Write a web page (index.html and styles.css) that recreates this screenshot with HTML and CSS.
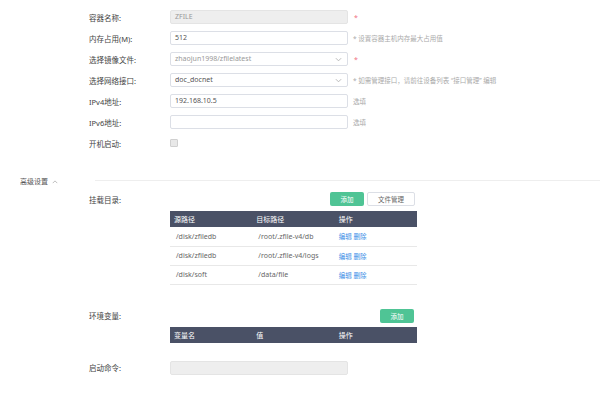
FILE: index.html
```html
<!DOCTYPE html>
<html lang="zh-CN">
<head>
    <meta charset="UTF-8">
    <meta name="viewport" content="width=device-width, initial-scale=1.0">
    <title>编辑容器</title>
    <link rel="stylesheet" href="styles.css">
</head>

<body>
    <!-- 基本设置 -->
    <div class="form">
        <div class="row">
            <span class="label">容器名称:</span>
            <div class="input disabled">ZFILE</div>
            <span class="req">*</span>
        </div>
        <div class="row">
            <span class="label">内存占用(M):</span>
            <div class="input">512</div>
            <span class="tip">* 设置容器主机内存最大占用值</span>
        </div>
        <div class="row">
            <span class="label">选择镜像文件:</span>
            <div class="input select muted">zhaojun1998/zfilelatest
                <svg class="arrow" viewBox="0 0 8 5"><polyline points="1,1 4,4 7,1"/></svg>
            </div>
            <span class="req">*</span>
        </div>
        <div class="row">
            <span class="label">选择网络接口:</span>
            <div class="input select">doc_docnet
                <svg class="arrow" viewBox="0 0 8 5"><polyline points="1,1 4,4 7,1"/></svg>
            </div>
            <span class="tip">* 如需管理接口，请前往设备列表 “接口管理” 编辑</span>
        </div>
        <div class="row">
            <span class="label">IPv4地址:</span>
            <div class="input">192.168.10.5</div>
            <span class="tip">选填</span>
        </div>
        <div class="row">
            <span class="label">IPv6地址:</span>
            <div class="input"></div>
            <span class="tip">选填</span>
        </div>
        <div class="row">
            <span class="label">开机启动:</span>
            <span class="checkbox"></span>
        </div>
    </div>

    <!-- 高级设置 -->
    <div class="advanced">
        <span class="advanced-title">高级设置 <svg class="up" viewBox="0 0 8 5"><polyline points="1,4 4,1 7,4"/></svg></span>
        <span class="line"></span>
    </div>

    <div class="section">
        <div class="section-head">
            <span class="label">挂载目录:</span>
            <div class="buttons">
                <button class="btn green">添加</button>
                <button class="btn plain">文件管理</button>
            </div>
        </div>
        <table class="table">
            <tr><th>源路径</th><th>目标路径</th><th>操作</th></tr>
            <tr><td>/disk/zfiledb</td><td>/root/.zfile-v4/db</td><td><a>编辑</a> <a>删除</a></td></tr>
            <tr><td>/disk/zfiledb</td><td>/root/.zfile-v4/logs</td><td><a>编辑</a> <a>删除</a></td></tr>
            <tr><td>/disk/soft</td><td>/data/file</td><td><a>编辑</a> <a>删除</a></td></tr>
        </table>
    </div>

    <div class="section env">
        <div class="section-head">
            <span class="label">环境变量:</span>
            <div class="buttons">
                <button class="btn green">添加</button>
            </div>
        </div>
        <table class="table">
            <tr><th>变量名</th><th>值</th><th>操作</th></tr>
        </table>
    </div>

    <div class="section start">
        <div class="row">
            <span class="label">启动命令:</span>
            <div class="input disabled"></div>
        </div>
    </div>
</body>

</html>
```

FILE: styles.css
```css
* {
    margin: 0;
    padding: 0;
    box-sizing: border-box;
}

body {
    background-color: #ffffff;
    font-family: 'Noto Sans', 'Noto Sans CJK SC', sans-serif;
    font-size: 8px;
    color: #333333;
}

/* Formulário */
.form {
    display: flex;
    flex-direction: column;
    gap: 7px;
    padding-top: 10px;
    padding-left: 89px;
}

.row {
    display: flex;
    align-items: center;
    height: 14px;
}

.label {
    width: 81px;
    flex-shrink: 0;
    font-size: 7.5px;
    color: #444444;
}

.input {
    position: relative;
    width: 178px;
    height: 14px;
    line-height: 12px;
    padding: 0 4px;
    border: 1px solid #dcdfe6;
    border-radius: 2px;
    font-size: 7px;
    color: #555555;
}

.input.disabled {
    background-color: #eeeeee;
    border-color: #e4e4e4;
    color: #999999;
}

.input.muted {
    color: #999999;
}

.arrow {
    position: absolute;
    right: 5px;
    top: 4px;
    width: 7px;
    height: 5px;
    fill: none;
    stroke: #b0b0b0;
    stroke-width: 1;
}

.req {
    margin-left: 6px;
    font-size: 7px;
    color: #f07080;
}

.tip {
    margin-left: 5px;
    font-size: 6.5px;
    color: #aaaaaa;
}

.checkbox {
    width: 8px;
    height: 8px;
    border: 1px solid #d0d0d0;
    border-radius: 1px;
    background-color: #e8e8e8;
}

/* Avançado */
.advanced {
    display: flex;
    align-items: center;
    height: 14px;
    margin-top: 24px;
}

.advanced-title {
    width: 95px;
    padding-left: 20px;
    font-size: 7px;
    color: #555555;
}

.up {
    width: 6px;
    height: 4px;
    fill: none;
    stroke: #aaaaaa;
    stroke-width: 1;
    margin-left: 2px;
}

.line {
    flex-grow: 1;
    height: 1px;
    margin-top: -2px;
    background-color: #eeeeee;
}

.section {
    padding-left: 89px;
    width: 417px;
}

.section-head {
    display: flex;
    align-items: center;
    height: 14px;
    margin-top: 4px;
    padding-right: 2px;
}

.env .section-head {
    margin-top: 24px;
    padding-right: 3px;
}

.buttons {
    display: flex;
    gap: 3px;
    margin-left: auto;
}

.btn {
    height: 14px;
    border-radius: 2px;
    font-family: 'Noto Sans', 'Noto Sans CJK SC', sans-serif;
    font-size: 6.5px;
    cursor: pointer;
}

.btn.green {
    width: 34px;
    background-color: #4fc495;
    border: none;
    color: #ffffff;
}

.btn.plain {
    width: 48px;
    background-color: #ffffff;
    border: 1px solid #dcdfe6;
    color: #666666;
}

.table {
    margin-left: 81px;
    margin-top: 5px;
    width: 247px;
    border-collapse: collapse;
    table-layout: fixed;
    font-size: 7px;
}

.env .table {
    margin-top: 4px;
}

.table th {
    height: 16px;
    padding-left: 4px;
    background-color: #4a5166;
    color: #ffffff;
    font-weight: 400;
    text-align: left;
}

.table td {
    height: 19px;
    padding-left: 6px;
    border-bottom: 1px solid #e8e8e8;
    color: #666666;
}

.table td:last-child {
    padding-left: 4px;
}

.table a {
    color: #3a8ee6;
    font-size: 6.5px;
}

.start {
    margin-top: 18px;
}
```
